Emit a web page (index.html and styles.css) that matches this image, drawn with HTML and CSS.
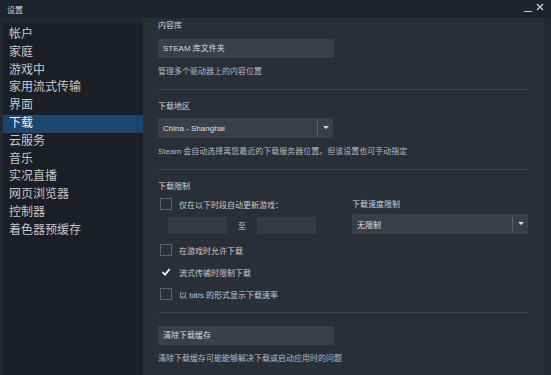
FILE: index.html
```html
<!DOCTYPE html>
<html lang="zh">

<head>
    <meta charset="UTF-8">
    <title>设置</title>
    <link rel="stylesheet" href="styles.css">
</head>

<body>
    <header class="titlebar">
        <span class="title">设置</span>
        <div class="win-buttons">
            <span class="min"></span>
            <svg class="close" width="8" height="8" viewBox="0 0 8 8"><path d="M1 1L7 7M7 1L1 7" stroke="#c8ccd2" stroke-width="1.4"/></svg>
        </div>
    </header>
    <div class="window">
        <nav class="sidebar">
            <a>帐户</a>
            <a>家庭</a>
            <a>游戏中</a>
            <a>家用流式传输</a>
            <a>界面</a>
            <a class="active">下载</a>
            <a>云服务</a>
            <a>音乐</a>
            <a>实况直播</a>
            <a>网页浏览器</a>
            <a>控制器</a>
            <a>着色器预缓存</a>
        </nav>
        <main class="main">
            <div class="label first">内容库</div>
            <div class="button">STEAM 库文件夹</div>
            <div class="desc">管理多个驱动器上的内容位置</div>
            <div class="divider"></div>

            <div class="label">下载地区</div>
            <div class="select region">
                <span>China - Shanghai</span>
                <span class="sel-arrow"></span>
            </div>
            <div class="desc">Steam 会自动选择离您最近的下载服务器位置。但该设置也可手动指定</div>
            <div class="divider"></div>

            <div class="label">下载限制</div>
            <div class="limits">
                <div class="limits-left">
                    <div class="check-row first-check"><span class="box"></span>仅在以下时段自动更新游戏：</div>
                    <div class="time-row">
                        <span class="time-input"></span>
                        <span class="to">至</span>
                        <span class="time-input"></span>
                    </div>
                </div>
                <div class="limits-right">
                    <div class="label small">下载速度限制</div>
                    <div class="select speed">
                        <span>无限制</span>
                        <span class="sel-arrow"></span>
                    </div>
                </div>
            </div>
            <div class="check-row"><span class="box"></span>在游戏时允许下载</div>
            <div class="check-row"><span class="box checked"><svg width="10" height="10" viewBox="0 0 10 10"><path d="M1.5 5.2L4 7.6L8.6 2.2" fill="none" stroke="#eef0f2" stroke-width="1.8"/></svg></span>流式传输时限制下载</div>
            <div class="check-row"><span class="box"></span>以 bit/s 的形式显示下载速率</div>
            <div class="divider"></div>

            <div class="button clear">清除下载缓存</div>
            <div class="desc">清除下载缓存可能能够解决下载或启动应用时的问题</div>
        </main>
        <div class="scroll-strip"></div>
    </div>
</body>

</html>
```

FILE: styles.css
```css
body {
    margin: 0;
    background: #1f232a;
    font-family: "Liberation Sans", "Noto Sans CJK SC", sans-serif;
    color: #c6cad1;
    width: 551px;
    height: 375px;
    overflow: hidden;
}

.titlebar {
    height: 18px;
    background: #1e222a;
    display: flex;
    justify-content: space-between;
    align-items: center;
    padding: 0 7px;
}

.title {
    font-size: 8px;
    color: #cfd3d9;
}

.win-buttons {
    display: flex;
    align-items: center;
    gap: 4px;
    margin-top: -4px;
}

.min {
    width: 8px;
    height: 1px;
    background: #c8ccd2;
    margin-top: 8px;
}

.window {
    display: flex;
    height: 357px;
    background: #23272e;
}

.sidebar {
    width: 140px;
    margin: 5px 0 0 3px;
    padding-top: 3px;
    background: #1b1e24;
    display: flex;
    flex-direction: column;
}

.sidebar a {
    height: 17.8px;
    line-height: 17.8px;
    font-size: 12px;
    padding-left: 6px;
    color: #c3c7ce;
}

.sidebar a.active {
    background: #1c4670;
    color: #eef1f5;
}

.main {
    flex: 1;
    background: #2a2e36;
    padding-left: 15px;
    padding-right: 16px;
}

.scroll-strip {
    width: 7px;
    background: #24282f;
}

.label {
    font-size: 8px;
    line-height: 10px;
    margin-top: 12px;
    color: #d0d4da;
}

.label.first {
    margin-top: 3px;
}

.label.small {
    margin-top: 2px;
}

.desc {
    font-size: 8px;
    line-height: 10px;
    margin-top: 9px;
    color: #b4b9c1;
}

.button {
    width: 171px;
    height: 19px;
    margin-top: 8px;
    padding-left: 5px;
    background: #3a3f48;
    font-size: 8px;
    line-height: 19px;
    color: #d6d9de;
}

.button.clear {
    margin-top: 13px;
}

.divider {
    height: 1px;
    width: 370px;
    background: #3d424b;
    margin-top: 12px;
}

.select {
    height: 20px;
    margin-top: 6px;
    background: #393e47;
    display: flex;
    align-items: center;
    justify-content: space-between;
    padding-left: 5px;
    font-size: 8px;
    color: #dfe2e6;
}

.select.region {
    width: 170px;
}

.select.speed {
    width: 171px;
    margin-top: 4px;
}

.sel-arrow {
    width: 15px;
    height: 14px;
    border-left: 1px solid #5e636c;
    position: relative;
}

.sel-arrow::after {
    content: "";
    position: absolute;
    left: 5px;
    top: 5px;
    border-left: 3px solid transparent;
    border-right: 3px solid transparent;
    border-top: 3px solid #d8dbe0;
}

.limits {
    display: flex;
    justify-content: space-between;
    width: 370px;
}

.limits-left {
    width: 190px;
}

.limits-right {
    width: 176px;
    margin-top: 6px;
}

.check-row {
    display: flex;
    align-items: center;
    font-size: 8px;
    color: #c6cad1;
    margin-top: 10px;
    height: 12px;
}

.check-row.first-check {
    margin-top: 6px;
}

.box {
    width: 10px;
    height: 10px;
    border: 1px solid #5b6069;
    background: #2c3038;
    margin: 0 7px 0 2px;
    display: flex;
    align-items: center;
    justify-content: center;
}

.box.checked {
    border-color: transparent;
    background: transparent;
}

.time-row {
    display: flex;
    align-items: center;
    margin-top: 7px;
    padding-left: 10px;
}

.time-input {
    width: 59px;
    height: 17px;
    background: #363b43;
}

.to {
    font-size: 8px;
    width: 30px;
    text-align: center;
}
```
